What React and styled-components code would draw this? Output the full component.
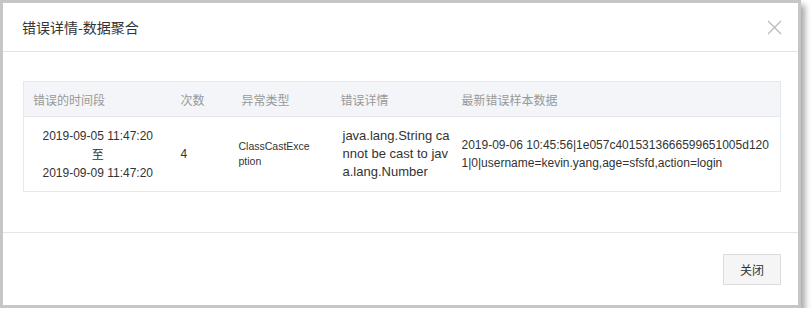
import React from "react";
import styled, { createGlobalStyle } from "styled-components";

const Global = createGlobalStyle`
  html, body { margin: 0; padding: 0; background: #fff; }
  body { font-family: "Liberation Sans", Arial, "Noto Sans CJK SC", sans-serif; color: #333; }
`;

const Dialog = styled.div`
  width: 795px;
  border: 3px solid #c6c6c6;
  background: #fff;
  box-shadow: 4px 5px 6px rgba(0, 0, 0, 0.35);
  display: flex;
  flex-direction: column;
`;

const Header = styled.div`
  height: 48px;
  display: flex;
  align-items: center;
  justify-content: space-between;
  padding: 0 16px 0 19px;
  border-bottom: 1px solid #e5e5e5;
`;

const Title = styled.div`
  font-size: 14px;
  color: #333;
  font-family: "Noto Sans CJK SC", sans-serif;
`;

const Close = styled.button`
  border: 0;
  background: none;
  padding: 0;
  width: 16px;
  height: 16px;
  display: flex;
  align-items: center;
  justify-content: center;
  cursor: pointer;
`;

const Body = styled.div`
  padding: 29px 17px 40px 20px;
  border-bottom: 1px solid #e5e5e5;
`;

const Table = styled.table`
  width: 758px;
  border-collapse: collapse;
  border: 1px solid #e5e8ec;
  table-layout: fixed;
`;

const Th = styled.th`
  height: 34px;
  background: #f3f5f8;
  text-align: left;
  font-weight: normal;
  font-size: 12px;
  color: #999;
  padding: 0 9px;
  font-family: "Noto Sans CJK SC", sans-serif;
  border-bottom: 1px solid #e5e8ec;
`;

const Td = styled.td`
  height: 74px;
  font-size: 12px;
  color: #333;
  padding: 0 9px;
  text-align: ${(p) => (p.$center ? "center" : "left")};
  line-height: 18px;
  vertical-align: middle;
`;

const Wrap = styled.div`
  width: ${(p) => p.$w}px;
  word-break: break-all;
  font-size: ${(p) => p.$fs || 12}px;
  line-height: ${(p) => p.$lh || 18}px;
  margin-left: ${(p) => p.$ml || 0}px;
`;

const Zhi = styled.span`
  font-family: "Noto Sans CJK SC", sans-serif;
`;

const Footer = styled.div`
  height: 72px;
  display: flex;
  align-items: center;
  justify-content: flex-end;
  padding: 0 17px 0 0;
`;

const Button = styled.button`
  width: 58px;
  height: 31px;
  border: 1px solid #dcdcdc;
  background: #f5f5f5;
  color: #333;
  font-size: 12px;
  font-family: "Noto Sans CJK SC", sans-serif;
  cursor: pointer;
  margin-top: 1px;
`;

export default function App() {
  return (
    <>
      <Global />
      <Dialog>
        <Header>
          <Title>错误详情-数据聚合</Title>
          <Close aria-label="close">
            <svg width="15" height="15" viewBox="0 0 15 15">
              <path d="M1 1 L14 14 M14 1 L1 14" stroke="#bbb" strokeWidth="1.3" fill="none" />
            </svg>
          </Close>
        </Header>
        <Body>
          <Table>
            <colgroup>
              <col style={{ width: 148 }} />
              <col style={{ width: 61 }} />
              <col style={{ width: 99 }} />
              <col style={{ width: 121 }} />
              <col />
            </colgroup>
            <thead>
              <tr>
                <Th>错误的时间段</Th>
                <Th>次数</Th>
                <Th>异常类型</Th>
                <Th>错误详情</Th>
                <Th>最新错误样本数据</Th>
              </tr>
            </thead>
            <tbody>
              <tr>
                <Td $center>
                  2019-09-05 11:47:20
                  <br />
                  <Zhi>至</Zhi>
                  <br />
                  2019-09-09 11:47:20
                </Td>
                <Td>4</Td>
                <Td>
                  <Wrap $w={73} $fs={10.5} $lh={15} $ml={-3}>ClassCastException</Wrap>
                </Td>
                <Td>
                  <Wrap $w={108} $fs={13} $ml={2}>java.lang.String cannot be cast to java.lang.Number</Wrap>
                </Td>
                <Td>
                  <Wrap $w={310}>2019-09-06 10:45:56|1e057c4015313666599651005d1201|0|username=kevin.yang,age=sfsfd,action=login</Wrap>
                </Td>
              </tr>
            </tbody>
          </Table>
        </Body>
        <Footer>
          <Button>关闭</Button>
        </Footer>
      </Dialog>
    </>
  );
}
